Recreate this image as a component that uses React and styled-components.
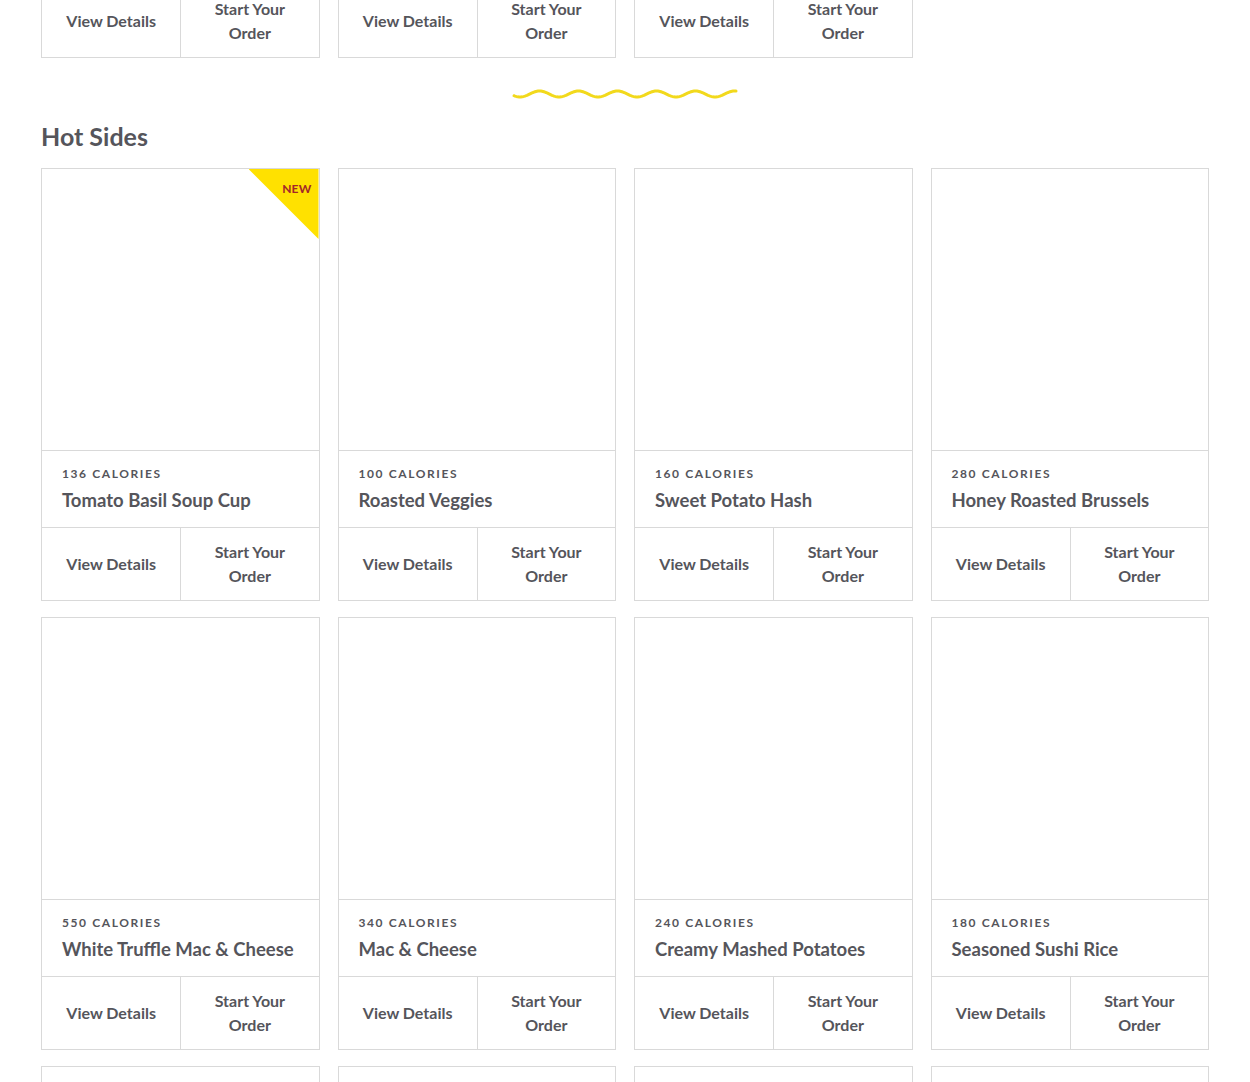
import React from "react";
import styled, { createGlobalStyle } from "styled-components";

const GlobalStyle = createGlobalStyle`
  html, body { margin: 0; padding: 0; background: #fff; overflow: hidden; }
  body { font-family: Lato, "Open Sans", "Liberation Sans", sans-serif; color: #4f4f55; }
  * { box-sizing: border-box; }
`;

const Page = styled.main`
  padding: 0 41px;
  margin-top: -375px;
`;

const Section = styled.section`
  display: flex;
  flex-direction: column;
`;

const Grid = styled.div`
  display: grid;
  grid-template-columns: repeat(4, 1fr);
  column-gap: 18px;
  row-gap: 16px;
`;

const Card = styled.article`
  border: 1px solid #d9d9d9;
  background: #fff;
  display: flex;
  flex-direction: column;
`;

const ImageArea = styled.div`
  position: relative;
  height: 281px;
  overflow: hidden;
`;

const NewBadge = styled.div`
  position: absolute;
  top: 0;
  right: 0;
  width: 70px;
  height: 70px;
  background: #ffe100;
  clip-path: polygon(0 0, 100% 0, 100% 100%);
  display: flex;
  justify-content: flex-end;
  padding: 13px 7px 0 0;
  font-size: 12px;
  font-weight: 700;
  color: #a3262a;
  letter-spacing: 0.2px;
  line-height: 14px;
`;

const Info = styled.div`
  border-top: 1px solid #d9d9d9;
  height: 77px;
  padding: 15px 20px 0;
`;

const Calories = styled.div`
  font-size: 12px;
  font-weight: 700;
  letter-spacing: 1.6px;
  text-transform: uppercase;
  line-height: 16px;
  color: #55555b;
`;

const Name = styled.h3`
  margin: 6px 0 0;
  font-size: 18.5px;
  font-weight: 700;
  line-height: 24px;
  color: #55555b;
  white-space: nowrap;
`;

const Actions = styled.div`
  border-top: 1px solid #d9d9d9;
  height: 73px;
  display: grid;
  grid-template-columns: 1fr 1fr;
`;

const ActionButton = styled.button`
  border: none;
  border-left: ${(p) => (p.$divider ? "1px solid #d9d9d9" : "none")};
  background: transparent;
  font-family: inherit;
  font-size: 16px;
  font-weight: 700;
  line-height: 24px;
  color: #55555b;
  padding: 0 18px;
  cursor: pointer;
`;

const WaveWrap = styled.div`
  display: flex;
  justify-content: center;
  margin-top: 30px;
  height: 12px;
`;

const Heading = styled.h2`
  margin: 21px 0 17px;
  font-size: 25px;
  font-weight: 700;
  line-height: 30px;
  color: #55555b;
`;

const Wave = () => {
  const w = 226;
  const period = 39;
  let d = "";
  for (let x = 0; x <= w - 4; x += 1) {
    const y = 6 - 3 * Math.cos(((x - 6) / period) * 2 * Math.PI + Math.PI);
    d += (x === 0 ? "M" : "L") + (x + 2) + " " + y.toFixed(2) + " ";
  }
  return (
    <svg width={w} height="12" viewBox={`0 0 ${w} 12`} aria-hidden="true">
      <path d={d} fill="none" stroke="#f2d91c" strokeWidth="3" strokeLinecap="round" strokeLinejoin="round" />
    </svg>
  );
};

const MenuCard = ({ item }) => (
  <Card>
    <ImageArea>{item.isNew && <NewBadge>NEW</NewBadge>}</ImageArea>
    <Info>
      <Calories>{item.cal} Calories</Calories>
      <Name>{item.name}</Name>
    </Info>
    <Actions>
      <ActionButton>View Details</ActionButton>
      <ActionButton $divider>
        Start Your
        <br />
        Order
      </ActionButton>
    </Actions>
  </Card>
);

const previous = [
  { cal: 90, name: "Apple" },
  { cal: 120, name: "Fruit Cup" },
  { cal: 150, name: "Side Salad" },
];

const hotSides = [
  { cal: 136, name: "Tomato Basil Soup Cup", isNew: true },
  { cal: 100, name: "Roasted Veggies" },
  { cal: 160, name: "Sweet Potato Hash" },
  { cal: 280, name: "Honey Roasted Brussels" },
  { cal: 550, name: "White Truffle Mac & Cheese" },
  { cal: 340, name: "Mac & Cheese" },
  { cal: 240, name: "Creamy Mashed Potatoes" },
  { cal: 180, name: "Seasoned Sushi Rice" },
  { cal: 210, name: "Garlic Green Beans" },
  { cal: 190, name: "Steamed Rice" },
  { cal: 260, name: "Corn Bread" },
  { cal: 150, name: "Miso Soup" },
];

export default function App() {
  return (
    <>
      <GlobalStyle />
      <Page>
        <Section>
          <Grid>
            {previous.map((it, i) => (
              <MenuCard key={i} item={it} />
            ))}
          </Grid>
        </Section>
        <WaveWrap>
          <Wave />
        </WaveWrap>
        <Section>
          <Heading>Hot Sides</Heading>
          <Grid>
            {hotSides.map((it, i) => (
              <MenuCard key={i} item={it} />
            ))}
          </Grid>
        </Section>
      </Page>
    </>
  );
}
